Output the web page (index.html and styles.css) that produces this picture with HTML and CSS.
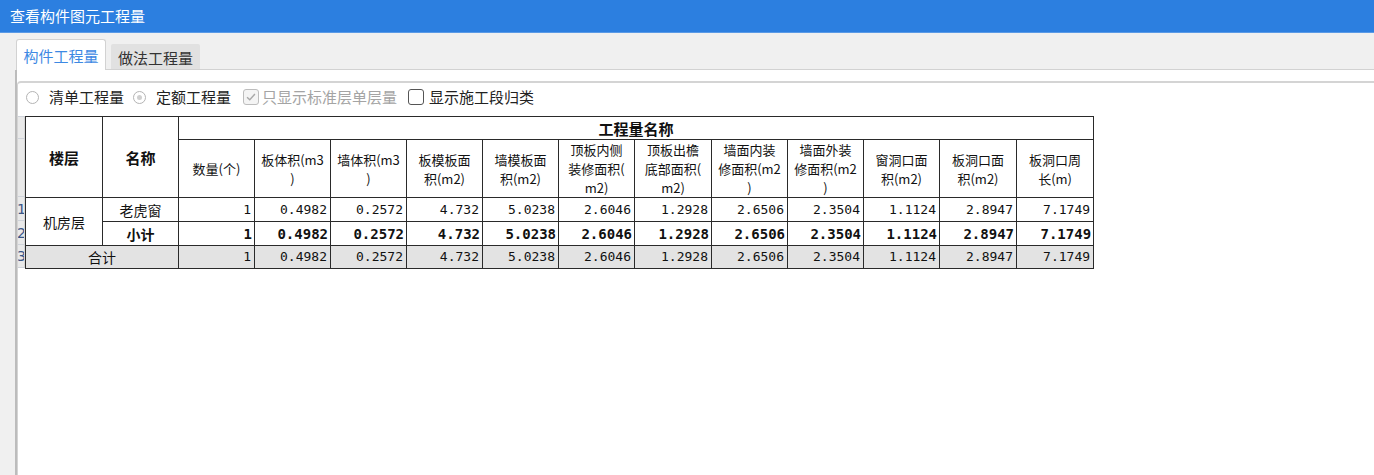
FILE: index.html
```html
<!DOCTYPE html>
<html lang="zh-CN">
<head>
<meta charset="utf-8">
<title>查看构件图元工程量</title>
<link rel="stylesheet" href="styles.css">
</head>
<body>
<div class="window">
  <div class="titlebar">查看构件图元工程量</div>
  <div class="tabs">
    <div class="tab active">构件工程量</div>
    <div class="tab">做法工程量</div>
  </div>
  <div class="content">
    <div class="panel">
      <div class="options">
        <span class="radio"></span><span class="opt-text t1">清单工程量</span>
        <span class="radio checked"></span><span class="opt-text t2">定额工程量</span>
        <span class="check disabled"><svg viewBox="0 0 16 16" width="14" height="14"><path d="M3.5 8.2 L6.6 11.2 L12.5 4.6" fill="none" stroke="#a8a8a8" stroke-width="1.6"/></svg></span><span class="opt-text dim">只显示标准层单层量</span>
        <span class="check c2"></span><span class="opt-text">显示施工段归类</span>
      </div>
      <div class="grid">
        <div class="rowhead">
          <div class="rh rh-h1"></div>
          <div class="rh rh-h2"></div>
          <div class="rh rh-d">1</div>
          <div class="rh rh-d">2</div>
          <div class="rh rh-t">3</div>
        </div>
        <table class="qty">
          <colgroup>
            <col class="w77"><col class="w76"><col class="w76"><col class="w76"><col class="w76"><col class="w76"><col class="w76"><col class="w76"><col class="w77"><col class="w76"><col class="w76"><col class="w76"><col class="w77"><col class="w77">
          </colgroup>
          <thead>
            <tr class="hr1">
              <th rowspan="2" class="bold">楼层</th>
              <th rowspan="2" class="bold">名称</th>
              <th colspan="12" class="bold">工程量名称</th>
            </tr>
            <tr class="hr2">
              <th>数量(个)</th>
              <th>板体积(m3<br>)</th>
              <th>墙体积(m3<br>)</th>
              <th>板模板面<br>积(m2)</th>
              <th>墙模板面<br>积(m2)</th>
              <th>顶板内侧<br>装修面积(<br>m2)</th>
              <th>顶板出檐<br>底部面积(<br>m2)</th>
              <th>墙面内装<br>修面积(m2<br>)</th>
              <th>墙面外装<br>修面积(m2<br>)</th>
              <th>窗洞口面<br>积(m2)</th>
              <th>板洞口面<br>积(m2)</th>
              <th>板洞口周<br>长(m)</th>
            </tr>
          </thead>
          <tbody>
            <tr class="dr">
              <td rowspan="2" class="name">机房层</td>
              <td class="name">老虎窗</td>
              <td class="num">1</td><td class="num">0.4982</td><td class="num">0.2572</td><td class="num">4.732</td><td class="num">5.0238</td><td class="num">2.6046</td><td class="num">1.2928</td><td class="num">2.6506</td><td class="num">2.3504</td><td class="num">1.1124</td><td class="num">2.8947</td><td class="num">7.1749</td>
            </tr>
            <tr class="dr sub">
              <td class="name bold">小计</td>
              <td class="num">1</td><td class="num">0.4982</td><td class="num">0.2572</td><td class="num">4.732</td><td class="num">5.0238</td><td class="num">2.6046</td><td class="num">1.2928</td><td class="num">2.6506</td><td class="num">2.3504</td><td class="num">1.1124</td><td class="num">2.8947</td><td class="num">7.1749</td>
            </tr>
            <tr class="total">
              <td colspan="2" class="name">合计</td>
              <td class="num">1</td><td class="num">0.4982</td><td class="num">0.2572</td><td class="num">4.732</td><td class="num">5.0238</td><td class="num">2.6046</td><td class="num">1.2928</td><td class="num">2.6506</td><td class="num">2.3504</td><td class="num">1.1124</td><td class="num">2.8947</td><td class="num">7.1749</td>
            </tr>
          </tbody>
        </table>
      </div>
    </div>
  </div>
</div>
</body>
</html>
```

FILE: styles.css
```css
html, body {
  margin: 0;
  padding: 0;
}
body {
  width: 1374px;
  height: 475px;
  overflow: hidden;
  background: #f0f0f0;
  font-family: "Noto Sans CJK SC", "Microsoft YaHei", sans-serif;
  color: #222;
}
.window {
  display: flex;
  flex-direction: column;
  height: 475px;
}
.titlebar {
  height: 33px;
  box-sizing: border-box;
  background: #2c7fe0;
  border-bottom: 1px solid #5a9ae6;
  color: #fff;
  font-size: 15px;
  line-height: 32px;
  padding-left: 10px;
}
.tabs {
  height: 37px;
  box-sizing: border-box;
  margin-left: 16px;
  display: flex;
  align-items: flex-end;
  gap: 5px;
  border-bottom: 1px solid #d2d2d2;
}
.tab {
  font-size: 15px;
  box-sizing: border-box;
  display: flex;
  align-items: center;
  justify-content: center;
}
.tab.active {
  height: 31px;
  width: 90px;
  margin-bottom: -1px;
  background: #fff;
  border: 1px solid #d2d2d2;
  border-bottom: none;
  border-radius: 3px 3px 0 0;
  color: #3d89e3;
  padding-top: 1px;
}
.tab:not(.active) {
  height: 25px;
  width: 89px;
  background: #e1e1e1;
  color: #333;
  border-radius: 2px 2px 0 0;
  padding-top: 1px;
}
.content {
  flex: 1;
  margin-left: 15px;
  border-left: 2px solid #bcbcbc;
  background: #fff;
  padding-top: 11px;
}
.panel {
  border-top: 2px solid #d4d4d4;
  border-left: 1px solid #d4d4d4;
  border-top-left-radius: 4px;
  height: 100%;
  box-sizing: border-box;
}
.options {
  height: 28px;
  display: flex;
  align-items: center;
  padding-left: 8px;
  font-size: 15px;
  color: #222;
}
.radio {
  width: 11px;
  height: 11px;
  border: 1px solid #b4b4b4;
  border-radius: 50%;
  background: #fff;
  margin-right: 10px;
  display: flex;
  align-items: center;
  justify-content: center;
  flex: none;
}
.radio.checked::after {
  content: "";
  width: 5px;
  height: 5px;
  border-radius: 50%;
  background: #cfcfcf;
}
.opt-text {
  line-height: 20px;
  white-space: nowrap;
}
.opt-text.t1 { margin-right: 9px; }
.opt-text.t2 { margin-right: 12px; }
.opt-text.dim {
  color: #a4a4a4;
  margin-right: 11px;
}
.check {
  width: 14px;
  height: 14px;
  border: 1px solid #555;
  border-radius: 3px;
  background: #fff;
  margin-right: 3px;
  display: flex;
  align-items: center;
  justify-content: center;
  flex: none;
}
.check.c2 {
  margin-right: 5px;
}
.check.disabled {
  border-color: #bdbdbd;
  background: #f4f4f4;
}
.grid {
  margin-top: 5px;
  display: flex;
  align-items: flex-start;
}
.rowhead {
  width: 7px;
  display: flex;
  flex-direction: column;
  background: #e9e9e9;
}
.rh {
  box-sizing: border-box;
  border-bottom: 1px solid #cfd3da;
  border-right: 1px solid #d6d6d6;
  font-family: "DejaVu Sans", sans-serif;
  font-size: 14px;
  color: #3a5687;
  overflow: hidden;
  line-height: 24px;
  text-indent: -1px;
}
.rh-h1 { height: 23px; border-top: 1px solid #cfd3da; }
.rh-h2 { height: 58px; }
.rh-d { height: 24px; }
.rh-t { height: 23px; line-height: 23px; }
.qty {
  border-collapse: collapse;
  table-layout: fixed;
  width: 1069px;
  border: 1px solid #2a2a2a;
}
.w77 { width: 77px; }
.w76 { width: 76px; }
.qty th, .qty td {
  border: 1px solid #2a2a2a;
  padding: 0 3px;
  white-space: nowrap;
  overflow: hidden;
}
.qty th {
  font-size: 13px;
  font-weight: normal;
  line-height: 19px;
  text-align: center;
  vertical-align: middle;
  color: #111;
}
.qty th.bold {
  font-weight: bold;
  font-size: 15px;
  line-height: 21px;
}
.hr1 { height: 23px; }
.hr2 { height: 58px; }
.dr { height: 24px; }
.total { height: 23px; }
.qty td {
  font-size: 14px;
  color: #111;
  line-height: 20px;
}
.qty td.name {
  text-align: center;
}
.qty td.bold {
  font-weight: bold;
}
.qty td.num {
  text-align: right;
  font-family: "DejaVu Sans Mono", monospace;
  font-size: 13px;
  padding-right: 3px;
}
.sub td.num {
  font-weight: bold;
  font-size: 14px;
  padding-right: 2px;
}
.total td {
  background: #e3e3e3;
}
```
